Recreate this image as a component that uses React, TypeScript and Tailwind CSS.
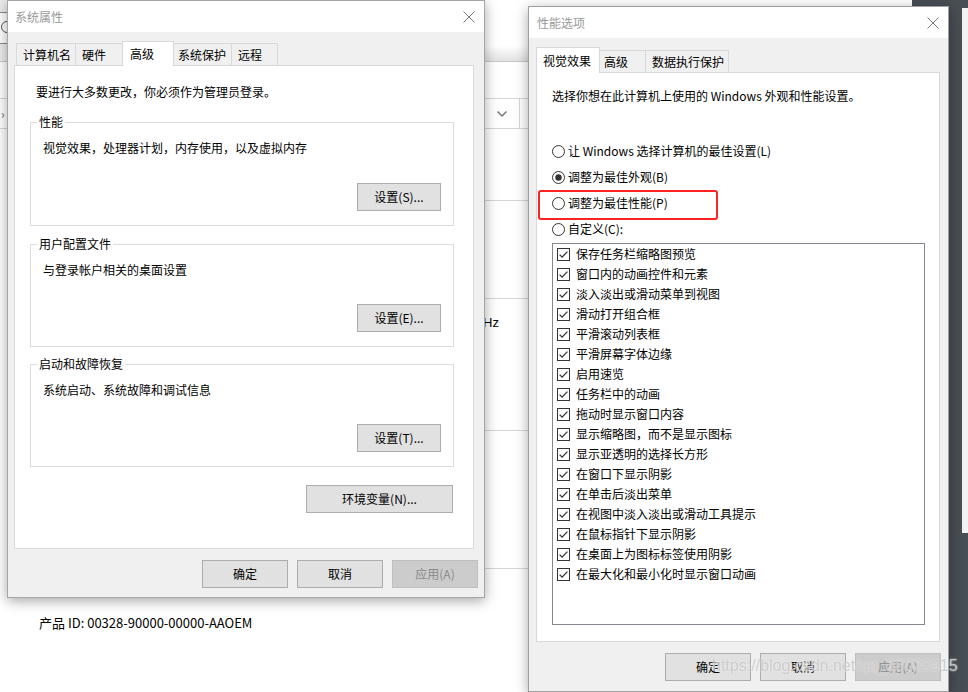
import React from "react";

type BtnProps = { children: React.ReactNode; className?: string; disabled?: boolean };

function Btn({ children, className = "", disabled = false }: BtnProps) {
  const tone = disabled
    ? "bg-[#cccccc] border-[#bfbfbf] text-[#8a8a8a]"
    : "bg-[#e1e1e1] border-[#adadad] text-black";
  return (
    <div className={`flex items-center justify-center h-[28px] border text-[12px] leading-[16px] ${tone} ${className}`}>
      {children}
    </div>
  );
}

function CloseX() {
  return (
    <svg width="12" height="12" viewBox="0 0 12 12">
      <path d="M0.5 0.5 L11.5 11.5 M11.5 0.5 L0.5 11.5" stroke="#7a7a7a" strokeWidth="1" fill="none" />
    </svg>
  );
}

function CheckBox() {
  return (
    <svg width="13" height="13" viewBox="0 0 13 13" className="shrink-0">
      <rect x="0.5" y="0.5" width="12" height="12" fill="#ffffff" stroke="#333333" />
      <path d="M2.6 6.6 L5.1 9.1 L10.4 3.6" fill="none" stroke="#333333" strokeWidth="1.3" />
    </svg>
  );
}

function Radio({ checked = false }: { checked?: boolean }) {
  return (
    <svg width="13" height="13" viewBox="0 0 13 13" className="shrink-0">
      <circle cx="6.5" cy="6.5" r="6" fill="#ffffff" stroke="#333333" />
      {checked && <circle cx="6.5" cy="6.5" r="3.2" fill="#333333" />}
    </svg>
  );
}

type GroupProps = { title: string; text: string; button: string; className?: string };

function Group({ title, text, button, className = "" }: GroupProps) {
  return (
    <div className={`relative w-[424px] border border-[#dcdcdc] flex flex-col ${className}`}>
      <div className="absolute left-[6px] top-[-9px] bg-white px-[2px] text-[12px] leading-[16px]">{title}</div>
      <div className="pt-[17px] pl-[12px] text-[12px] leading-[16px]">{text}</div>
      <Btn className="mt-auto self-end mr-[12px] mb-[14px] w-[84px]">{button}</Btn>
    </div>
  );
}

const effects = [
  "保存任务栏缩略图预览",
  "窗口内的动画控件和元素",
  "淡入淡出或滑动菜单到视图",
  "滑动打开组合框",
  "平滑滚动列表框",
  "平滑屏幕字体边缘",
  "启用速览",
  "任务栏中的动画",
  "拖动时显示窗口内容",
  "显示缩略图，而不是显示图标",
  "显示亚透明的选择长方形",
  "在窗口下显示阴影",
  "在单击后淡出菜单",
  "在视图中淡入淡出或滑动工具提示",
  "在鼠标指针下显示阴影",
  "在桌面上为图标标签使用阴影",
  "在最大化和最小化时显示窗口动画",
];

function SystemProperties() {
  const tabBase = "h-[22px] flex items-center border border-b-0 border-[#d9d9d9] bg-[#f0f0f0] text-[12px] leading-[16px]";
  return (
    <div className="absolute left-[7px] top-0 w-[478px] h-[598px] border border-[#a6a6a6] bg-[#f0f0f0] flex flex-col shadow-[0_3px_12px_rgba(0,0,0,0.35)]">
      <div className="h-[31px] bg-white flex items-center justify-between pl-[7px] pr-[9px]">
        <span className="text-[12px] leading-[16px] text-[#999999]">系统属性</span>
        <CloseX />
      </div>
      <div className="flex flex-col pt-[9px]">
        <div className="relative z-10 flex items-end h-[24px] pl-[8px]">
          <div className={`${tabBase} w-[60px] pl-[6px]`}>计算机名</div>
          <div className={`${tabBase} w-[48px] -ml-px pl-[6px]`}>硬件</div>
          <div className="h-[25px] -mb-px w-[52px] -ml-px pl-[7px] flex items-center border border-b-0 border-[#d9d9d9] bg-white text-[12px] leading-[16px]">高级</div>
          <div className={`${tabBase} w-[59px] -ml-px pl-[4px]`}>系统保护</div>
          <div className={`${tabBase} w-[47px] -ml-px pl-[6px]`}>远程</div>
        </div>
        <div className="ml-[6px] w-[460px] h-[484px] border border-[#d9d9d9] bg-white flex flex-col pl-[15px] pt-[18px]">
          <div className="pl-[6px] text-[12px] leading-[16px]">要进行大多数更改，你必须作为管理员登录。</div>
          <Group className="mt-[22px] h-[104px]" title="性能" text="视觉效果，处理器计划，内存使用，以及虚拟内存" button="设置(S)..." />
          <Group className="mt-[18px] h-[103px]" title="用户配置文件" text="与登录帐户相关的桌面设置" button="设置(E)..." />
          <Group className="mt-[17px] h-[103px]" title="启动和故障恢复" text="系统启动、系统故障和调试信息" button="设置(T)..." />
          <Btn className="mt-[18px] ml-[276px] w-[147px]">环境变量(N)...</Btn>
        </div>
        <div className="mt-[11px] flex justify-end gap-[9px] pr-[6px]">
          <Btn className="w-[86px]">确定</Btn>
          <Btn className="w-[86px]">取消</Btn>
          <Btn className="w-[86px]" disabled>应用(A)</Btn>
        </div>
      </div>
    </div>
  );
}

function PerformanceOptions() {
  const tabBase = "h-[22px] flex items-center border border-b-0 border-[#d9d9d9] bg-[#f0f0f0] text-[12px] leading-[16px]";
  return (
    <div className="absolute left-[528px] top-[6px] w-[421px] h-[686px] border border-[#a0a0a0] bg-[#f0f0f0] flex flex-col shadow-[0_3px_12px_rgba(0,0,0,0.35)]">
      <div className="h-[31px] bg-white flex items-center justify-between pl-[8px] pr-[9px]">
        <span className="text-[12px] leading-[16px] text-[#999999]">性能选项</span>
        <CloseX />
      </div>
      <div className="flex flex-col pt-[9px]">
        <div className="relative z-10 flex items-end h-[25px] pl-[7px]">
          <div className="h-[26px] -mb-px w-[64px] pl-[6px] flex items-center border border-b-0 border-[#d9d9d9] bg-white text-[12px] leading-[16px]">视觉效果</div>
          <div className={`${tabBase} w-[47px] -ml-px pl-[4px]`}>高级</div>
          <div className={`${tabBase} w-[84px] -ml-px pl-[6px]`}>数据执行保护</div>
        </div>
        <div className="ml-[7px] w-[404px] h-[570px] border border-[#d9d9d9] bg-white flex flex-col pl-[15px] pt-[15px]">
          <div className="text-[12px] leading-[16px]">选择你想在此计算机上使用的 Windows 外观和性能设置。</div>
          <div className="mt-[34px] flex flex-col text-[12px] leading-[16px]">
            <div className="h-[26px] flex items-center gap-[3px]"><Radio /><span>让 Windows 选择计算机的最佳设置(L)</span></div>
            <div className="h-[26px] flex items-center gap-[3px]"><Radio checked /><span>调整为最佳外观(B)</span></div>
            <div className="h-[26px] flex items-center gap-[3px]"><Radio /><span>调整为最佳性能(P)</span></div>
            <div className="h-[26px] flex items-center gap-[3px]"><Radio /><span>自定义(C):</span></div>
          </div>
          <div className="mt-[1px] w-[373px] h-[382px] border border-[#828790] flex flex-col pl-[4px]">
            {effects.map((e) => (
              <div key={e} className="h-[20px] flex items-center gap-[6px] text-[12px] leading-[16px]">
                <CheckBox />
                <span>{e}</span>
              </div>
            ))}
          </div>
        </div>
        <div className="mt-[11px] flex justify-end gap-[9px] pr-[7px]">
          <Btn className="w-[86px]">确定</Btn>
          <Btn className="w-[86px]">取消</Btn>
          <Btn className="w-[86px]" disabled>应用(A)</Btn>
        </div>
      </div>
    </div>
  );
}

function SettingsPage() {
  return (
    <div className="w-[912px] h-full bg-white flex flex-col">
      {/* header with search box */}
      <div className="relative h-[62px] shrink-0 border-b border-[#c9c9c9] bg-gradient-to-b from-white from-75% to-[#e2e2e2]">
        <div className="absolute left-0 top-0 w-[40px] h-[61px] bg-[#ececec]">
          <div className="mt-[12px] -ml-[20px] w-[60px] h-[32px] border border-[#8a8a8a] bg-white relative">
            <div className="absolute left-[20px] top-[8px] w-[12px] h-[12px] rounded-full border border-[#555555]" />
          </div>
        </div>
      </div>
      {/* dropdown row */}
      <div className="mt-[36px] h-[31px] shrink-0 w-[560px] border-y border-[#d6d6d6] flex items-center text-[12px] text-[#666666]">
        <span className="pl-[1px] w-[480px]">›</span>
        <svg width="12" height="8" viewBox="0 0 12 8" className="ml-[16px]">
          <path d="M1.5 1.5 L6 6 L10.5 1.5" stroke="#777777" strokeWidth="1.5" fill="none" />
        </svg>
        <div className="ml-[11px] h-full w-px bg-[#d6d6d6]" />
      </div>
      {/* list separators */}
      <div className="mt-[71px] ml-[30px] w-[640px] h-[98px] shrink-0 border-t border-[#d6d6d6]" />
      <div className="ml-[30px] w-[640px] h-[132px] shrink-0 border-t border-[#d6d6d6] pl-[453px] pt-[15px] text-[13px] leading-[18px] font-['Segoe_UI','Liberation_Sans',sans-serif]">
        Hz
      </div>
      <div className="ml-[30px] w-[640px] h-[138px] shrink-0 border-t border-[#d6d6d6]" />
      <div className="ml-[30px] w-[640px] shrink-0 border-t border-[#d6d6d6] pt-[45px] pl-[9px] text-[13px] leading-[18px] text-black">
        产品 ID: 00328-90000-00000-AAOEM
      </div>
    </div>
  );
}

export default function App() {
  return (
    <div className="relative w-[968px] h-[692px] overflow-hidden flex font-['Noto_Sans_CJK_SC',sans-serif] text-black">
      <SettingsPage />
      <div className="flex-1 h-full bg-[#474e54] flex flex-col">
        <div className="ml-[50px] mt-[8px] w-[6px] h-[525px] bg-[#f2f2f2]" />
      </div>
      <SystemProperties />
      <PerformanceOptions />
      {/* annotation around the best-performance option */}
      <div className="absolute left-[538px] top-[190px] w-[180px] h-[30px] border-2 border-[#ff2222] rounded-[3px]" />
      <div className="absolute left-[712px] top-[655px] text-[16px] leading-[22px] text-[rgba(200,200,200,0.9)] font-['Liberation_Sans',sans-serif] [text-shadow:0_0_2px_rgba(255,255,255,0.7)]">
        https://blog.csdn.net/qq_38020915
      </div>
    </div>
  );
}
